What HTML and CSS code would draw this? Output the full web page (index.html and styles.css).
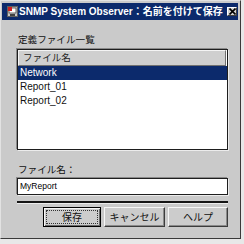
FILE: index.html
```html
<!DOCTYPE html>
<html lang="ja">
<head>
<meta charset="utf-8">
<title>名前を付けて保存</title>
<link rel="stylesheet" href="styles.css">
</head>
<body>
<div class="window">
  <div class="titlebar">
    <svg class="app-icon" width="11" height="11" viewBox="0 0 11 11">
      <rect x="0.5" y="0.5" width="10" height="10" fill="#c8c8c8" stroke="#606060"/>
      <rect x="2" y="2" width="7" height="5" fill="#ffffff" stroke="#404040" stroke-width="0.8"/>
      <rect x="1" y="1" width="4" height="4" fill="#d02020"/>
      <rect x="3" y="8" width="5" height="2" fill="#404040"/>
    </svg>
    <span class="title">SNMP System Observer：名前を付けて保存</span>
    <span class="close">
      <svg width="7" height="7" viewBox="0 0 7 7"><path d="M0.5 0.5 L6.5 6.5 M6.5 0.5 L0.5 6.5" stroke="#000" stroke-width="1.6"/></svg>
    </span>
  </div>
  <div class="content">
    <div class="label">定義ファイル一覧</div>
    <div class="listbox">
      <div class="list-header"><span>ファイル名</span></div>
      <div class="row selected">Network</div>
      <div class="row">Report_01</div>
      <div class="row">Report_02</div>
    </div>
    <div class="label label-name">ファイル名：</div>
    <div class="input">MyReport</div>
    <div class="separator"></div>
    <div class="buttons">
      <button class="btn btn-save default"><span class="focus">保存</span></button>
      <button class="btn btn-cancel">キャンセル</button>
      <button class="btn btn-help">ヘルプ</button>
    </div>
  </div>
</div>
</body>
</html>
```
FILE: styles.css
```css
html, body {
  margin: 0;
  padding: 0;
  background: #e8e8e8;
}

.window {
  box-sizing: border-box;
  width: 241px;
  height: 239px;
  background: #cacaca;
  border-top: 1px solid #e2e2e2;
  border-left: 1px solid #e2e2e2;
  border-right: 1px solid #3a3a3a;
  border-bottom: 1px solid #3a3a3a;
  padding: 2px 2px 0 1px;
  display: flex;
  flex-direction: column;
  font-family: "Liberation Sans", "Noto Sans CJK JP", sans-serif;
}

.titlebar {
  height: 17px;
  background: #0c2a6c;
  display: flex;
  align-items: center;
  padding: 0 1px 0 5px;
  color: #ffffff;
}

.app-icon {
  flex: none;
  margin-right: 1px;
}

.title {
  font-weight: bold;
  font-size: 10px;
  line-height: 17px;
  white-space: nowrap;
  flex: 1;
}

.close {
  flex: none;
  box-sizing: border-box;
  width: 10px;
  height: 9px;
  background: #d4d4d4;
  border-top: 1px solid #ffffff;
  border-left: 1px solid #ffffff;
  border-right: 1px solid #404040;
  border-bottom: 1px solid #404040;
  display: flex;
  align-items: center;
  justify-content: center;
}

.content {
  display: flex;
  flex-direction: column;
  padding: 13px 10px 0 15px;
}

.label {
  font-size: 9.6px;
  line-height: 14px;
  color: #111;
  padding-left: 1px;
  margin-bottom: 2px;
}

.label-name {
  margin-top: 13px;
  margin-bottom: 1px;
}

.listbox {
  box-sizing: border-box;
  height: 101px;
  background: #ffffff;
  border: 1px solid #1e1e1e;
  box-shadow: -1px -1px 0 #8a8a8a, 1px 1px 0 #ececec;
  display: flex;
  flex-direction: column;
}

.list-header {
  box-sizing: border-box;
  height: 16px;
  margin-right: 1px;
  background: #cfcfcf;
  border-top: 1px solid #f4f4f4;
  border-left: 1px solid #f4f4f4;
  border-right: 1px solid #707070;
  border-bottom: 1px solid #707070;
  font-size: 9.6px;
  line-height: 14px;
  padding-left: 4px;
  color: #222;
}

.row {
  height: 14px;
  line-height: 14px;
  font-size: 10px;
  padding-left: 2px;
  color: #111;
}

.row.selected {
  background: #0c2a6c;
  color: #ffffff;
}

.input {
  box-sizing: border-box;
  height: 17px;
  background: #ffffff;
  border: 1px solid #1e1e1e;
  box-shadow: -1px -1px 0 #8a8a8a, 1px 1px 0 #ececec;
  font-size: 8.5px;
  line-height: 15px;
  padding-left: 2px;
  color: #000;
}

.separator {
  height: 2px;
  margin-top: 6px;
  background: #151515;
  box-shadow: 0 1px 0 #ececec;
}

.buttons {
  display: flex;
  justify-content: flex-end;
  gap: 3px;
  margin-top: 4px;
}

.btn {
  box-sizing: border-box;
  height: 20px;
  margin: 0;
  padding: 0;
  background: #cccccc;
  border-top: 1px solid #f6f6f6;
  border-left: 1px solid #f6f6f6;
  border-right: 1px solid #3c3c3c;
  border-bottom: 1px solid #3c3c3c;
  box-shadow: inset -1px -1px 0 #8a8a8a;
  font-family: "Noto Sans CJK JP", sans-serif;
  font-size: 10px;
  line-height: 16px;
  color: #111;
  display: flex;
  align-items: center;
  justify-content: center;
}

.btn-save { width: 58px; }
.btn-cancel { width: 61px; }
.btn-help { width: 60px; }

.btn.default {
  border: 1px solid #000;
  box-shadow: inset 1px 1px 0 #f6f6f6, inset -1px -1px 0 #6a6a6a;
  padding: 2px;
}

.focus {
  box-sizing: border-box;
  flex: 1;
  align-self: stretch;
  border: 1px dotted #333;
  display: flex;
  align-items: center;
  justify-content: center;
}
```
